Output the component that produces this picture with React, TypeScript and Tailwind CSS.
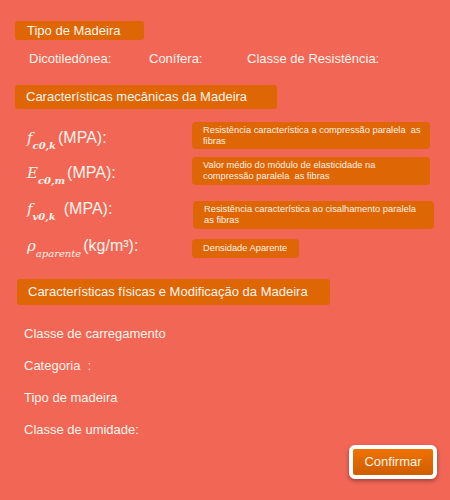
import React from "react";

const sans = { fontFamily: "'Liberation Sans', Arial, sans-serif" };
const serif = { fontFamily: "'DejaVu Serif', 'Liberation Serif', serif" };

// Section heading on an orange bar
const SectionBar = ({ children, className = "" }: { children: React.ReactNode; className?: string }) => (
  <div className={`bg-[#de6604] rounded-[3px] text-[#fff4ea] flex items-center ${className}`}>{children}</div>
);

// Little orange description bubble next to each formula
const Hint = ({ children, className = "" }: { children: React.ReactNode; className?: string }) => (
  <div
    className={`bg-[#de6604] rounded-[4px] text-[#fff1e4] text-[9.3px] leading-[11px] pl-[11px] pr-[4px] flex items-center whitespace-nowrap ${className}`}
  >
    <span>{children}</span>
  </div>
);

const Sym = ({ base, sub }: { base: string; sub: React.ReactNode }) => (
  <span style={serif} className="italic text-[15px] text-[#fff4ea]">
    {base}
    <sub className="text-[10px] font-bold align-[-3px] leading-none">{sub}</sub>
  </span>
);

export default function App() {
  return (
    <div style={sans} className="w-[450px] h-[500px] bg-[#f26656] text-[#fff4ea] overflow-hidden relative">
      <div className="pt-[21px] pl-[15px]">
        <SectionBar className="w-[129px] h-[19px] pl-[12px] text-[13px]">Tipo de Madeira</SectionBar>
      </div>

      <div className="flex text-[13px] mt-[11px] h-[15px] leading-[15px]">
        <span className="ml-[29px] w-[120px]">Dicotiledônea:</span>
        <span className="w-[98px]">Conífera:</span>
        <span>Classe de Resistência:</span>
      </div>

      <div className="pl-[15px] mt-[19px]">
        <SectionBar className="w-[262px] h-[24px] pl-[11px] text-[13px]">Características mecânicas da Madeira</SectionBar>
      </div>

      {/* mechanical properties */}
      <div className="mt-[13px] flex h-[28px]">
        <div className="ml-[27px] w-[165px] mt-[6px] flex items-baseline leading-[20px]">
          <Sym base="f" sub={<>c0,k</>} />
          <span className="text-[16px] ml-[2px]">(MPA):</span>
        </div>
        <Hint className="w-[238px] h-[27px]">
          Resistência característica a compressão paralela&nbsp; as
          <br />
          fibras
        </Hint>
      </div>

      <div className="mt-[7px] flex h-[28px]">
        <div className="ml-[27px] w-[165px] mt-[6px] flex items-baseline leading-[20px]">
          <Sym base="E" sub={<>c0,m</>} />
          <span className="text-[16px] ml-[2px]">(MPA):</span>
        </div>
        <Hint className="w-[238px] h-[28px]">
          Valor médio do módulo de elasticidade na
          <br />
          compressão paralela&nbsp; as fibras
        </Hint>
      </div>

      <div className="mt-[14px] flex h-[30px]">
        <div className="ml-[27px] w-[166px] flex items-baseline leading-[20px]">
          <Sym base="f" sub={<>v0,k</>} />
          <span className="text-[16px] ml-[8px]">(MPA):</span>
        </div>
        <Hint className="w-[241px] h-[28px] mt-[2px]">
          Resistência característica ao cisalhamento paralela
          <br />
          as fibras
        </Hint>
      </div>

      <div className="mt-[7px] flex h-[22px]">
        <div className="ml-[27px] w-[165px] flex items-baseline leading-[20px]">
          <Sym base="ρ" sub={<span className="font-normal">aparente</span>} />
          <span className="text-[16px] ml-[2px]">(kg/m³):</span>
        </div>
        <Hint className="w-[107px] h-[19px] mt-[3px]">Densidade Aparente</Hint>
      </div>

      <div className="pl-[17px] mt-[21px]">
        <SectionBar className="w-[313px] h-[26px] pl-[11px] text-[13px]">
          Características físicas e Modificação da Madeira
        </SectionBar>
      </div>

      {/* physical properties */}
      <div className="pl-[24px] text-[13px] leading-[15px] flex flex-col gap-[17px] mt-[21px]">
        <span>Classe de carregamento</span>
        <span>Categoria&nbsp; :</span>
        <span>Tipo de madeira</span>
        <span>Classe de umidade:</span>
      </div>

      <div className="flex justify-end pr-[13px] mt-[8px]">
        <button className="w-[88px] h-[34px] rounded-[6px] border-[4px] border-white shadow-[0_2px_4px_rgba(0,0,0,0.35)] bg-gradient-to-b from-[#ef7200] to-[#cf5d00] text-[13px] text-[#fff4ea] flex items-center justify-center">
          Confirmar
        </button>
      </div>
    </div>
  );
}
